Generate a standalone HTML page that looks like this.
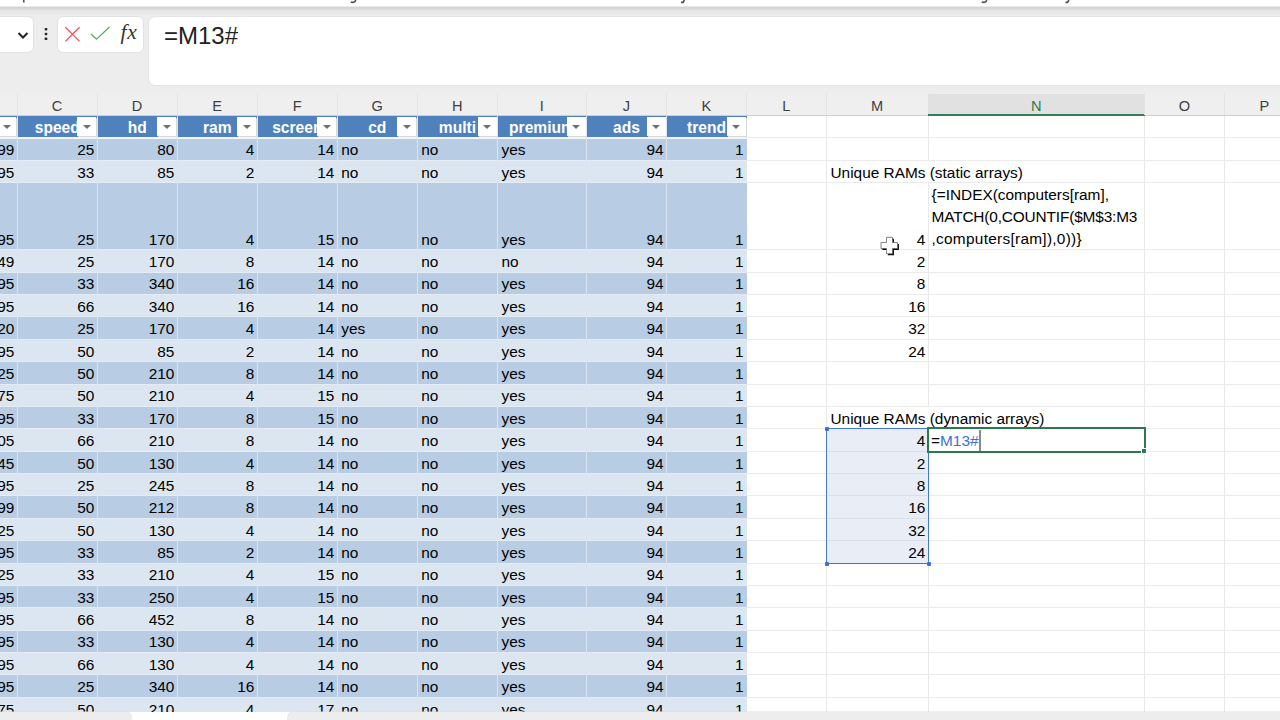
<!DOCTYPE html><html><head><meta charset="utf-8"><style>
*{margin:0;padding:0;box-sizing:border-box}
html,body{width:1280px;height:720px;overflow:hidden;background:#fff;font-family:"Liberation Sans",sans-serif}
.ab{position:absolute}
.t{position:absolute;white-space:nowrap;font-size:15.4px;color:#000;line-height:16px}
.r{text-align:right}
.hd{position:absolute;white-space:nowrap;font-size:15.6px;color:#fff;font-weight:bold;line-height:16px;text-align:center;overflow:hidden}
.btn{position:absolute;background:#fff;width:19px;height:19px;box-shadow:1px 1px 0 #d8d8d8}
.btn:after{content:"";position:absolute;left:5.5px;top:8px;border-left:4px solid transparent;border-right:4px solid transparent;border-top:4px solid #6f6f6f}
.ch{position:absolute;top:93px;height:22px;font-size:14.6px;color:#404040;text-align:center;line-height:26px;border-right:1px solid #e3e3e3}
.vg{position:absolute;top:116px;width:1px;background:#e8e8e8}
.hg{position:absolute;left:0;width:1280px;height:1px;background:#ebebeb}
</style></head><body>

<div class="ab" style="left:0;top:0;width:1280px;height:7px;background:#fff"></div>
<div class="ab" style="left:0;top:6px;width:1280px;height:87px;background:#ededed"></div>
<div class="ab" style="left:0;top:6px;width:1280px;height:9px;background:linear-gradient(#f4f4f4 0px,#d3d3d3 1.6px,#dcdcdc 3px,#e6e6e6 5px,#ededed 9px)"></div>
<svg class="ab" style="left:0;top:0" width="1280" height="6" viewBox="0 0 1280 6"><g fill="none" stroke="#505050" stroke-width="1.6"><path d="M23.8 0 V2.6"/><path d="M355.5 0 V0.8 Q355 2.4 353 2.4 Q351.5 2.4 350.8 1.8"/><path d="M684.5 0 L683 2.4 H681"/><path d="M986.5 0 V0.8 Q986 2.4 984 2.4 Q982.5 2.4 981.8 1.8"/><path d="M1069 0 L1067.5 2.4 H1065.5"/></g></svg>
<div class="ab" style="left:-10px;top:16.5px;width:43px;height:35.5px;background:#fff;border-radius:5px;box-shadow:0 0 0 1px #e2e2e2"></div>
<svg class="ab" style="left:17px;top:30px" width="12" height="10" viewBox="0 0 12 10"><path d="M1.5 3 L6 7.5 L10.5 3" fill="none" stroke="#222" stroke-width="2"/></svg>
<svg class="ab" style="left:43px;top:27px" width="6" height="14" viewBox="0 0 6 14"><rect x="1.7" y="0.9" width="2.6" height="2.6" rx="0.7" fill="#2a2a2a"/><rect x="1.7" y="5.7" width="2.6" height="2.6" rx="0.7" fill="#2a2a2a"/><rect x="1.7" y="10.5" width="2.6" height="2.6" rx="0.7" fill="#2a2a2a"/></svg>
<div class="ab" style="left:58.3px;top:16.5px;width:84.7px;height:35.5px;background:#fff;border-radius:5px;box-shadow:0 0 0 1px #e2e2e2"></div>
<svg class="ab" style="left:64px;top:26px" width="17" height="17" viewBox="0 0 17 17"><path d="M1.4 1.2 L15.6 15.4 M15.6 1.2 L1.4 15.4" stroke="#ee5555" stroke-width="1.3" fill="none"/></svg>
<svg class="ab" style="left:90px;top:26px" width="21" height="16" viewBox="0 0 21 16"><path d="M1 8 L6.5 13.2 L19.5 1" stroke="#55b065" stroke-width="1.3" fill="none"/></svg>
<div class="ab" style="left:120.5px;top:18.4px;font-family:'Liberation Serif',serif;font-style:italic;font-size:21.5px;letter-spacing:0.8px;color:#333;line-height:28px">fx</div>
<div class="ab" style="left:148.8px;top:16.5px;width:1200px;height:68.2px;background:#fff;border-radius:6px;box-shadow:0 0 0 1px #e4e4e4"></div>
<div class="ab" style="left:164px;top:22px;font-size:24px;color:#222;line-height:28px">=M13#</div>
<div class="ab" style="left:0;top:93px;width:1280px;height:22.5px;background:#efefef;border-bottom:1px solid #cfcfcf"></div>
<div class="ch" style="left:-63px;width:80.89999999999999px;color:#3f3f3f">B</div>
<div class="ch" style="left:17.3px;width:80.6px;color:#3f3f3f">C</div>
<div class="ch" style="left:97.3px;width:80.60000000000001px;color:#3f3f3f">D</div>
<div class="ch" style="left:177.3px;width:80.6px;color:#3f3f3f">E</div>
<div class="ch" style="left:257.3px;width:80.6px;color:#3f3f3f">F</div>
<div class="ch" style="left:337.3px;width:80.6px;color:#3f3f3f">G</div>
<div class="ch" style="left:417.3px;width:80.79999999999998px;color:#3f3f3f">H</div>
<div class="ch" style="left:497.5px;width:89.6px;color:#3f3f3f">I</div>
<div class="ch" style="left:586.5px;width:80.6px;color:#3f3f3f">J</div>
<div class="ch" style="left:666.5px;width:80.6px;color:#3f3f3f">K</div>
<div class="ch" style="left:746.5px;width:80.6px;color:#3f3f3f">L</div>
<div class="ch" style="left:826.5px;width:102.39999999999995px;color:#3f3f3f">M</div>
<div class="ab" style="left:928.3px;top:94px;width:216.4000000000001px;height:22px;background:#e1e1e1"></div>
<div class="ab" style="left:928.3px;top:113.5px;width:216.4000000000001px;height:2.5px;background:#367f56"></div>
<div class="ch" style="left:928.3px;width:217.00000000000009px;color:#2a7a4c">N</div>
<div class="ch" style="left:1144.7px;width:80.6px;color:#3f3f3f">O</div>
<div class="ch" style="left:1224.7px;width:80.6px;color:#3f3f3f">P</div>
<div class="vg" style="left:16.8px;height:596px"></div>
<div class="vg" style="left:96.8px;height:596px"></div>
<div class="vg" style="left:176.8px;height:596px"></div>
<div class="vg" style="left:256.8px;height:596px"></div>
<div class="vg" style="left:336.8px;height:596px"></div>
<div class="vg" style="left:416.8px;height:596px"></div>
<div class="vg" style="left:497.0px;height:596px"></div>
<div class="vg" style="left:586.0px;height:596px"></div>
<div class="vg" style="left:666.0px;height:596px"></div>
<div class="vg" style="left:746.0px;height:596px"></div>
<div class="vg" style="left:826.0px;height:596px"></div>
<div class="vg" style="left:927.8px;height:596px"></div>
<div class="vg" style="left:1144.2px;height:596px"></div>
<div class="vg" style="left:1224.2px;height:596px"></div>
<div class="vg" style="left:1304.2px;height:596px"></div>
<div class="hg" style="top:137px"></div>
<div class="hg" style="top:160px"></div>
<div class="hg" style="top:182px"></div>
<div class="hg" style="top:249px"></div>
<div class="hg" style="top:272px"></div>
<div class="hg" style="top:294px"></div>
<div class="hg" style="top:316px"></div>
<div class="hg" style="top:339px"></div>
<div class="hg" style="top:361px"></div>
<div class="hg" style="top:384px"></div>
<div class="hg" style="top:406px"></div>
<div class="hg" style="top:428px"></div>
<div class="hg" style="top:451px"></div>
<div class="hg" style="top:473px"></div>
<div class="hg" style="top:495px"></div>
<div class="hg" style="top:518px"></div>
<div class="hg" style="top:540px"></div>
<div class="hg" style="top:563px"></div>
<div class="hg" style="top:585px"></div>
<div class="hg" style="top:607px"></div>
<div class="hg" style="top:630px"></div>
<div class="hg" style="top:652px"></div>
<div class="hg" style="top:674px"></div>
<div class="hg" style="top:697px"></div>
<div class="ab" style="left:0;top:115.8px;width:747px;height:22.174999999999997px;background:#4f81bd"></div>
<div class="hd" style="left:-63px;top:119.6px;width:60.3px;"><span style="display:inline-block;width:80.3px">price</span></div>
<div class="btn" style="left:-2.6999999999999993px;top:117.3px"></div>
<div class="hd" style="left:17.3px;top:119.6px;width:60.0px;"><span style="display:inline-block;width:80.0px">speed</span></div>
<div class="btn" style="left:77.3px;top:117.3px"></div>
<div class="hd" style="left:97.3px;top:119.6px;width:60.000000000000014px;"><span style="display:inline-block;width:80.00000000000001px">hd</span></div>
<div class="btn" style="left:157.3px;top:117.3px"></div>
<div class="hd" style="left:177.3px;top:119.6px;width:60.0px;"><span style="display:inline-block;width:80.0px">ram</span></div>
<div class="btn" style="left:237.3px;top:117.3px"></div>
<div class="hd" style="left:257.3px;top:119.6px;width:60.0px;"><span style="display:inline-block;width:80.0px">screen</span></div>
<div class="btn" style="left:317.3px;top:117.3px"></div>
<div class="hd" style="left:337.3px;top:119.6px;width:60.0px;"><span style="display:inline-block;width:80.0px">cd</span></div>
<div class="btn" style="left:397.3px;top:117.3px"></div>
<div class="hd" style="left:417.3px;top:119.6px;width:60.19999999999999px;"><span style="display:inline-block;width:80.19999999999999px">multi</span></div>
<div class="btn" style="left:477.5px;top:117.3px"></div>
<div class="hd" style="left:497.5px;top:119.6px;width:69.0px;"><span style="display:inline-block;width:89.0px">premium</span></div>
<div class="btn" style="left:566.5px;top:117.3px"></div>
<div class="hd" style="left:586.5px;top:119.6px;width:60.0px;"><span style="display:inline-block;width:80.0px">ads</span></div>
<div class="btn" style="left:646.5px;top:117.3px"></div>
<div class="hd" style="left:666.5px;top:119.6px;width:60.0px;"><span style="display:inline-block;width:80.0px">trend</span></div>
<div class="btn" style="left:726.5px;top:117.3px"></div>
<div class="ab" style="left:0;top:138.475px;width:747px;height:21.875px;background:#b8cce4"></div>
<div class="t r" style="left:-63px;width:77.39999999999999px;top:142px">99</div>
<div class="t r" style="left:17.3px;width:77.1px;top:142px">25</div>
<div class="t r" style="left:97.3px;width:77.10000000000001px;top:142px">80</div>
<div class="t r" style="left:177.3px;width:77.1px;top:142px">4</div>
<div class="t r" style="left:257.3px;width:77.1px;top:142px">14</div>
<div class="t" style="left:341.3px;top:142px">no</div>
<div class="t" style="left:421.3px;top:142px">no</div>
<div class="t" style="left:501.5px;top:142px">yes</div>
<div class="t r" style="left:586.5px;width:77.1px;top:142px">94</div>
<div class="t r" style="left:666.5px;width:77.1px;top:142px">1</div>
<div class="ab" style="left:0;top:160.85px;width:747px;height:21.875px;background:#dce6f1"></div>
<div class="t r" style="left:-63px;width:77.39999999999999px;top:165px">95</div>
<div class="t r" style="left:17.3px;width:77.1px;top:165px">33</div>
<div class="t r" style="left:97.3px;width:77.10000000000001px;top:165px">85</div>
<div class="t r" style="left:177.3px;width:77.1px;top:165px">2</div>
<div class="t r" style="left:257.3px;width:77.1px;top:165px">14</div>
<div class="t" style="left:341.3px;top:165px">no</div>
<div class="t" style="left:421.3px;top:165px">no</div>
<div class="t" style="left:501.5px;top:165px">yes</div>
<div class="t r" style="left:586.5px;width:77.1px;top:165px">94</div>
<div class="t r" style="left:666.5px;width:77.1px;top:165px">1</div>
<div class="ab" style="left:0;top:183.225px;width:747px;height:66.625px;background:#b8cce4"></div>
<div class="t r" style="left:-63px;width:77.39999999999999px;top:232px">95</div>
<div class="t r" style="left:17.3px;width:77.1px;top:232px">25</div>
<div class="t r" style="left:97.3px;width:77.10000000000001px;top:232px">170</div>
<div class="t r" style="left:177.3px;width:77.1px;top:232px">4</div>
<div class="t r" style="left:257.3px;width:77.1px;top:232px">15</div>
<div class="t" style="left:341.3px;top:232px">no</div>
<div class="t" style="left:421.3px;top:232px">no</div>
<div class="t" style="left:501.5px;top:232px">yes</div>
<div class="t r" style="left:586.5px;width:77.1px;top:232px">94</div>
<div class="t r" style="left:666.5px;width:77.1px;top:232px">1</div>
<div class="ab" style="left:0;top:250.35px;width:747px;height:21.87500000000003px;background:#dce6f1"></div>
<div class="t r" style="left:-63px;width:77.39999999999999px;top:254px">49</div>
<div class="t r" style="left:17.3px;width:77.1px;top:254px">25</div>
<div class="t r" style="left:97.3px;width:77.10000000000001px;top:254px">170</div>
<div class="t r" style="left:177.3px;width:77.1px;top:254px">8</div>
<div class="t r" style="left:257.3px;width:77.1px;top:254px">14</div>
<div class="t" style="left:341.3px;top:254px">no</div>
<div class="t" style="left:421.3px;top:254px">no</div>
<div class="t" style="left:501.5px;top:254px">no</div>
<div class="t r" style="left:586.5px;width:77.1px;top:254px">94</div>
<div class="t r" style="left:666.5px;width:77.1px;top:254px">1</div>
<div class="ab" style="left:0;top:272.725px;width:747px;height:21.875px;background:#b8cce4"></div>
<div class="t r" style="left:-63px;width:77.39999999999999px;top:276px">95</div>
<div class="t r" style="left:17.3px;width:77.1px;top:276px">33</div>
<div class="t r" style="left:97.3px;width:77.10000000000001px;top:276px">340</div>
<div class="t r" style="left:177.3px;width:77.1px;top:276px">16</div>
<div class="t r" style="left:257.3px;width:77.1px;top:276px">14</div>
<div class="t" style="left:341.3px;top:276px">no</div>
<div class="t" style="left:421.3px;top:276px">no</div>
<div class="t" style="left:501.5px;top:276px">yes</div>
<div class="t r" style="left:586.5px;width:77.1px;top:276px">94</div>
<div class="t r" style="left:666.5px;width:77.1px;top:276px">1</div>
<div class="ab" style="left:0;top:295.1px;width:747px;height:21.875px;background:#dce6f1"></div>
<div class="t r" style="left:-63px;width:77.39999999999999px;top:299px">95</div>
<div class="t r" style="left:17.3px;width:77.1px;top:299px">66</div>
<div class="t r" style="left:97.3px;width:77.10000000000001px;top:299px">340</div>
<div class="t r" style="left:177.3px;width:77.1px;top:299px">16</div>
<div class="t r" style="left:257.3px;width:77.1px;top:299px">14</div>
<div class="t" style="left:341.3px;top:299px">no</div>
<div class="t" style="left:421.3px;top:299px">no</div>
<div class="t" style="left:501.5px;top:299px">yes</div>
<div class="t r" style="left:586.5px;width:77.1px;top:299px">94</div>
<div class="t r" style="left:666.5px;width:77.1px;top:299px">1</div>
<div class="ab" style="left:0;top:317.475px;width:747px;height:21.875px;background:#b8cce4"></div>
<div class="t r" style="left:-63px;width:77.39999999999999px;top:321px">20</div>
<div class="t r" style="left:17.3px;width:77.1px;top:321px">25</div>
<div class="t r" style="left:97.3px;width:77.10000000000001px;top:321px">170</div>
<div class="t r" style="left:177.3px;width:77.1px;top:321px">4</div>
<div class="t r" style="left:257.3px;width:77.1px;top:321px">14</div>
<div class="t" style="left:341.3px;top:321px">yes</div>
<div class="t" style="left:421.3px;top:321px">no</div>
<div class="t" style="left:501.5px;top:321px">yes</div>
<div class="t r" style="left:586.5px;width:77.1px;top:321px">94</div>
<div class="t r" style="left:666.5px;width:77.1px;top:321px">1</div>
<div class="ab" style="left:0;top:339.85px;width:747px;height:21.875px;background:#dce6f1"></div>
<div class="t r" style="left:-63px;width:77.39999999999999px;top:344px">95</div>
<div class="t r" style="left:17.3px;width:77.1px;top:344px">50</div>
<div class="t r" style="left:97.3px;width:77.10000000000001px;top:344px">85</div>
<div class="t r" style="left:177.3px;width:77.1px;top:344px">2</div>
<div class="t r" style="left:257.3px;width:77.1px;top:344px">14</div>
<div class="t" style="left:341.3px;top:344px">no</div>
<div class="t" style="left:421.3px;top:344px">no</div>
<div class="t" style="left:501.5px;top:344px">yes</div>
<div class="t r" style="left:586.5px;width:77.1px;top:344px">94</div>
<div class="t r" style="left:666.5px;width:77.1px;top:344px">1</div>
<div class="ab" style="left:0;top:362.225px;width:747px;height:21.875px;background:#b8cce4"></div>
<div class="t r" style="left:-63px;width:77.39999999999999px;top:366px">25</div>
<div class="t r" style="left:17.3px;width:77.1px;top:366px">50</div>
<div class="t r" style="left:97.3px;width:77.10000000000001px;top:366px">210</div>
<div class="t r" style="left:177.3px;width:77.1px;top:366px">8</div>
<div class="t r" style="left:257.3px;width:77.1px;top:366px">14</div>
<div class="t" style="left:341.3px;top:366px">no</div>
<div class="t" style="left:421.3px;top:366px">no</div>
<div class="t" style="left:501.5px;top:366px">yes</div>
<div class="t r" style="left:586.5px;width:77.1px;top:366px">94</div>
<div class="t r" style="left:666.5px;width:77.1px;top:366px">1</div>
<div class="ab" style="left:0;top:384.6px;width:747px;height:21.875px;background:#dce6f1"></div>
<div class="t r" style="left:-63px;width:77.39999999999999px;top:388px">75</div>
<div class="t r" style="left:17.3px;width:77.1px;top:388px">50</div>
<div class="t r" style="left:97.3px;width:77.10000000000001px;top:388px">210</div>
<div class="t r" style="left:177.3px;width:77.1px;top:388px">4</div>
<div class="t r" style="left:257.3px;width:77.1px;top:388px">15</div>
<div class="t" style="left:341.3px;top:388px">no</div>
<div class="t" style="left:421.3px;top:388px">no</div>
<div class="t" style="left:501.5px;top:388px">yes</div>
<div class="t r" style="left:586.5px;width:77.1px;top:388px">94</div>
<div class="t r" style="left:666.5px;width:77.1px;top:388px">1</div>
<div class="ab" style="left:0;top:406.975px;width:747px;height:21.875px;background:#b8cce4"></div>
<div class="t r" style="left:-63px;width:77.39999999999999px;top:411px">95</div>
<div class="t r" style="left:17.3px;width:77.1px;top:411px">33</div>
<div class="t r" style="left:97.3px;width:77.10000000000001px;top:411px">170</div>
<div class="t r" style="left:177.3px;width:77.1px;top:411px">8</div>
<div class="t r" style="left:257.3px;width:77.1px;top:411px">15</div>
<div class="t" style="left:341.3px;top:411px">no</div>
<div class="t" style="left:421.3px;top:411px">no</div>
<div class="t" style="left:501.5px;top:411px">yes</div>
<div class="t r" style="left:586.5px;width:77.1px;top:411px">94</div>
<div class="t r" style="left:666.5px;width:77.1px;top:411px">1</div>
<div class="ab" style="left:0;top:429.35px;width:747px;height:21.875px;background:#dce6f1"></div>
<div class="t r" style="left:-63px;width:77.39999999999999px;top:433px">05</div>
<div class="t r" style="left:17.3px;width:77.1px;top:433px">66</div>
<div class="t r" style="left:97.3px;width:77.10000000000001px;top:433px">210</div>
<div class="t r" style="left:177.3px;width:77.1px;top:433px">8</div>
<div class="t r" style="left:257.3px;width:77.1px;top:433px">14</div>
<div class="t" style="left:341.3px;top:433px">no</div>
<div class="t" style="left:421.3px;top:433px">no</div>
<div class="t" style="left:501.5px;top:433px">yes</div>
<div class="t r" style="left:586.5px;width:77.1px;top:433px">94</div>
<div class="t r" style="left:666.5px;width:77.1px;top:433px">1</div>
<div class="ab" style="left:0;top:451.725px;width:747px;height:21.875px;background:#b8cce4"></div>
<div class="t r" style="left:-63px;width:77.39999999999999px;top:456px">45</div>
<div class="t r" style="left:17.3px;width:77.1px;top:456px">50</div>
<div class="t r" style="left:97.3px;width:77.10000000000001px;top:456px">130</div>
<div class="t r" style="left:177.3px;width:77.1px;top:456px">4</div>
<div class="t r" style="left:257.3px;width:77.1px;top:456px">14</div>
<div class="t" style="left:341.3px;top:456px">no</div>
<div class="t" style="left:421.3px;top:456px">no</div>
<div class="t" style="left:501.5px;top:456px">yes</div>
<div class="t r" style="left:586.5px;width:77.1px;top:456px">94</div>
<div class="t r" style="left:666.5px;width:77.1px;top:456px">1</div>
<div class="ab" style="left:0;top:474.1px;width:747px;height:21.875px;background:#dce6f1"></div>
<div class="t r" style="left:-63px;width:77.39999999999999px;top:478px">95</div>
<div class="t r" style="left:17.3px;width:77.1px;top:478px">25</div>
<div class="t r" style="left:97.3px;width:77.10000000000001px;top:478px">245</div>
<div class="t r" style="left:177.3px;width:77.1px;top:478px">8</div>
<div class="t r" style="left:257.3px;width:77.1px;top:478px">14</div>
<div class="t" style="left:341.3px;top:478px">no</div>
<div class="t" style="left:421.3px;top:478px">no</div>
<div class="t" style="left:501.5px;top:478px">yes</div>
<div class="t r" style="left:586.5px;width:77.1px;top:478px">94</div>
<div class="t r" style="left:666.5px;width:77.1px;top:478px">1</div>
<div class="ab" style="left:0;top:496.475px;width:747px;height:21.875px;background:#b8cce4"></div>
<div class="t r" style="left:-63px;width:77.39999999999999px;top:500px">99</div>
<div class="t r" style="left:17.3px;width:77.1px;top:500px">50</div>
<div class="t r" style="left:97.3px;width:77.10000000000001px;top:500px">212</div>
<div class="t r" style="left:177.3px;width:77.1px;top:500px">8</div>
<div class="t r" style="left:257.3px;width:77.1px;top:500px">14</div>
<div class="t" style="left:341.3px;top:500px">no</div>
<div class="t" style="left:421.3px;top:500px">no</div>
<div class="t" style="left:501.5px;top:500px">yes</div>
<div class="t r" style="left:586.5px;width:77.1px;top:500px">94</div>
<div class="t r" style="left:666.5px;width:77.1px;top:500px">1</div>
<div class="ab" style="left:0;top:518.85px;width:747px;height:21.875px;background:#dce6f1"></div>
<div class="t r" style="left:-63px;width:77.39999999999999px;top:523px">25</div>
<div class="t r" style="left:17.3px;width:77.1px;top:523px">50</div>
<div class="t r" style="left:97.3px;width:77.10000000000001px;top:523px">130</div>
<div class="t r" style="left:177.3px;width:77.1px;top:523px">4</div>
<div class="t r" style="left:257.3px;width:77.1px;top:523px">14</div>
<div class="t" style="left:341.3px;top:523px">no</div>
<div class="t" style="left:421.3px;top:523px">no</div>
<div class="t" style="left:501.5px;top:523px">yes</div>
<div class="t r" style="left:586.5px;width:77.1px;top:523px">94</div>
<div class="t r" style="left:666.5px;width:77.1px;top:523px">1</div>
<div class="ab" style="left:0;top:541.225px;width:747px;height:21.875px;background:#b8cce4"></div>
<div class="t r" style="left:-63px;width:77.39999999999999px;top:545px">95</div>
<div class="t r" style="left:17.3px;width:77.1px;top:545px">33</div>
<div class="t r" style="left:97.3px;width:77.10000000000001px;top:545px">85</div>
<div class="t r" style="left:177.3px;width:77.1px;top:545px">2</div>
<div class="t r" style="left:257.3px;width:77.1px;top:545px">14</div>
<div class="t" style="left:341.3px;top:545px">no</div>
<div class="t" style="left:421.3px;top:545px">no</div>
<div class="t" style="left:501.5px;top:545px">yes</div>
<div class="t r" style="left:586.5px;width:77.1px;top:545px">94</div>
<div class="t r" style="left:666.5px;width:77.1px;top:545px">1</div>
<div class="ab" style="left:0;top:563.6px;width:747px;height:21.875px;background:#dce6f1"></div>
<div class="t r" style="left:-63px;width:77.39999999999999px;top:567px">25</div>
<div class="t r" style="left:17.3px;width:77.1px;top:567px">33</div>
<div class="t r" style="left:97.3px;width:77.10000000000001px;top:567px">210</div>
<div class="t r" style="left:177.3px;width:77.1px;top:567px">4</div>
<div class="t r" style="left:257.3px;width:77.1px;top:567px">15</div>
<div class="t" style="left:341.3px;top:567px">no</div>
<div class="t" style="left:421.3px;top:567px">no</div>
<div class="t" style="left:501.5px;top:567px">yes</div>
<div class="t r" style="left:586.5px;width:77.1px;top:567px">94</div>
<div class="t r" style="left:666.5px;width:77.1px;top:567px">1</div>
<div class="ab" style="left:0;top:585.975px;width:747px;height:21.875px;background:#b8cce4"></div>
<div class="t r" style="left:-63px;width:77.39999999999999px;top:590px">95</div>
<div class="t r" style="left:17.3px;width:77.1px;top:590px">33</div>
<div class="t r" style="left:97.3px;width:77.10000000000001px;top:590px">250</div>
<div class="t r" style="left:177.3px;width:77.1px;top:590px">4</div>
<div class="t r" style="left:257.3px;width:77.1px;top:590px">15</div>
<div class="t" style="left:341.3px;top:590px">no</div>
<div class="t" style="left:421.3px;top:590px">no</div>
<div class="t" style="left:501.5px;top:590px">yes</div>
<div class="t r" style="left:586.5px;width:77.1px;top:590px">94</div>
<div class="t r" style="left:666.5px;width:77.1px;top:590px">1</div>
<div class="ab" style="left:0;top:608.35px;width:747px;height:21.875px;background:#dce6f1"></div>
<div class="t r" style="left:-63px;width:77.39999999999999px;top:612px">95</div>
<div class="t r" style="left:17.3px;width:77.1px;top:612px">66</div>
<div class="t r" style="left:97.3px;width:77.10000000000001px;top:612px">452</div>
<div class="t r" style="left:177.3px;width:77.1px;top:612px">8</div>
<div class="t r" style="left:257.3px;width:77.1px;top:612px">14</div>
<div class="t" style="left:341.3px;top:612px">no</div>
<div class="t" style="left:421.3px;top:612px">no</div>
<div class="t" style="left:501.5px;top:612px">yes</div>
<div class="t r" style="left:586.5px;width:77.1px;top:612px">94</div>
<div class="t r" style="left:666.5px;width:77.1px;top:612px">1</div>
<div class="ab" style="left:0;top:630.725px;width:747px;height:21.875px;background:#b8cce4"></div>
<div class="t r" style="left:-63px;width:77.39999999999999px;top:634px">95</div>
<div class="t r" style="left:17.3px;width:77.1px;top:634px">33</div>
<div class="t r" style="left:97.3px;width:77.10000000000001px;top:634px">130</div>
<div class="t r" style="left:177.3px;width:77.1px;top:634px">4</div>
<div class="t r" style="left:257.3px;width:77.1px;top:634px">14</div>
<div class="t" style="left:341.3px;top:634px">no</div>
<div class="t" style="left:421.3px;top:634px">no</div>
<div class="t" style="left:501.5px;top:634px">yes</div>
<div class="t r" style="left:586.5px;width:77.1px;top:634px">94</div>
<div class="t r" style="left:666.5px;width:77.1px;top:634px">1</div>
<div class="ab" style="left:0;top:653.1px;width:747px;height:21.875px;background:#dce6f1"></div>
<div class="t r" style="left:-63px;width:77.39999999999999px;top:657px">95</div>
<div class="t r" style="left:17.3px;width:77.1px;top:657px">66</div>
<div class="t r" style="left:97.3px;width:77.10000000000001px;top:657px">130</div>
<div class="t r" style="left:177.3px;width:77.1px;top:657px">4</div>
<div class="t r" style="left:257.3px;width:77.1px;top:657px">14</div>
<div class="t" style="left:341.3px;top:657px">no</div>
<div class="t" style="left:421.3px;top:657px">no</div>
<div class="t" style="left:501.5px;top:657px">yes</div>
<div class="t r" style="left:586.5px;width:77.1px;top:657px">94</div>
<div class="t r" style="left:666.5px;width:77.1px;top:657px">1</div>
<div class="ab" style="left:0;top:675.475px;width:747px;height:21.875px;background:#b8cce4"></div>
<div class="t r" style="left:-63px;width:77.39999999999999px;top:679px">95</div>
<div class="t r" style="left:17.3px;width:77.1px;top:679px">25</div>
<div class="t r" style="left:97.3px;width:77.10000000000001px;top:679px">340</div>
<div class="t r" style="left:177.3px;width:77.1px;top:679px">16</div>
<div class="t r" style="left:257.3px;width:77.1px;top:679px">14</div>
<div class="t" style="left:341.3px;top:679px">no</div>
<div class="t" style="left:421.3px;top:679px">no</div>
<div class="t" style="left:501.5px;top:679px">yes</div>
<div class="t r" style="left:586.5px;width:77.1px;top:679px">94</div>
<div class="t r" style="left:666.5px;width:77.1px;top:679px">1</div>
<div class="ab" style="left:0;top:697.85px;width:747px;height:21.875px;background:#dce6f1"></div>
<div class="t r" style="left:-63px;width:77.39999999999999px;top:702px">75</div>
<div class="t r" style="left:17.3px;width:77.1px;top:702px">50</div>
<div class="t r" style="left:97.3px;width:77.10000000000001px;top:702px">210</div>
<div class="t r" style="left:177.3px;width:77.1px;top:702px">4</div>
<div class="t r" style="left:257.3px;width:77.1px;top:702px">17</div>
<div class="t" style="left:341.3px;top:702px">no</div>
<div class="t" style="left:421.3px;top:702px">no</div>
<div class="t" style="left:501.5px;top:702px">yes</div>
<div class="t r" style="left:586.5px;width:77.1px;top:702px">94</div>
<div class="t r" style="left:666.5px;width:77.1px;top:702px">1</div>
<div class="ab" style="left:0;top:137px;width:747px;height:2px;background:#f2f5fa"></div>
<div class="ab" style="left:0;top:160px;width:747px;height:1px;background:#e6ecf5"></div>
<div class="ab" style="left:0;top:182px;width:747px;height:1px;background:#e6ecf5"></div>
<div class="ab" style="left:0;top:249px;width:747px;height:1px;background:#e6ecf5"></div>
<div class="ab" style="left:0;top:272px;width:747px;height:1px;background:#e6ecf5"></div>
<div class="ab" style="left:0;top:294px;width:747px;height:1px;background:#e6ecf5"></div>
<div class="ab" style="left:0;top:316px;width:747px;height:1px;background:#e6ecf5"></div>
<div class="ab" style="left:0;top:339px;width:747px;height:1px;background:#e6ecf5"></div>
<div class="ab" style="left:0;top:361px;width:747px;height:1px;background:#e6ecf5"></div>
<div class="ab" style="left:0;top:384px;width:747px;height:1px;background:#e6ecf5"></div>
<div class="ab" style="left:0;top:406px;width:747px;height:1px;background:#e6ecf5"></div>
<div class="ab" style="left:0;top:428px;width:747px;height:1px;background:#e6ecf5"></div>
<div class="ab" style="left:0;top:451px;width:747px;height:1px;background:#e6ecf5"></div>
<div class="ab" style="left:0;top:473px;width:747px;height:1px;background:#e6ecf5"></div>
<div class="ab" style="left:0;top:495px;width:747px;height:1px;background:#e6ecf5"></div>
<div class="ab" style="left:0;top:518px;width:747px;height:1px;background:#e6ecf5"></div>
<div class="ab" style="left:0;top:540px;width:747px;height:1px;background:#e6ecf5"></div>
<div class="ab" style="left:0;top:563px;width:747px;height:1px;background:#e6ecf5"></div>
<div class="ab" style="left:0;top:585px;width:747px;height:1px;background:#e6ecf5"></div>
<div class="ab" style="left:0;top:607px;width:747px;height:1px;background:#e6ecf5"></div>
<div class="ab" style="left:0;top:630px;width:747px;height:1px;background:#e6ecf5"></div>
<div class="ab" style="left:0;top:652px;width:747px;height:1px;background:#e6ecf5"></div>
<div class="ab" style="left:0;top:674px;width:747px;height:1px;background:#e6ecf5"></div>
<div class="ab" style="left:0;top:697px;width:747px;height:1px;background:#e6ecf5"></div>
<div class="ab" style="left:16.8px;top:116px;width:1px;height:596px;background:#d9e4f0"></div>
<div class="ab" style="left:96.8px;top:116px;width:1px;height:596px;background:#d9e4f0"></div>
<div class="ab" style="left:176.8px;top:116px;width:1px;height:596px;background:#d9e4f0"></div>
<div class="ab" style="left:256.8px;top:116px;width:1px;height:596px;background:#d9e4f0"></div>
<div class="ab" style="left:336.8px;top:116px;width:1px;height:596px;background:#d9e4f0"></div>
<div class="ab" style="left:416.8px;top:116px;width:1px;height:596px;background:#d9e4f0"></div>
<div class="ab" style="left:497.0px;top:116px;width:1px;height:596px;background:#d9e4f0"></div>
<div class="ab" style="left:586.0px;top:116px;width:1px;height:596px;background:#d9e4f0"></div>
<div class="ab" style="left:666.0px;top:116px;width:1px;height:596px;background:#d9e4f0"></div>
<div class="ab" style="left:927px;top:161.35px;width:3px;height:20.875px;background:#fff"></div>
<div class="ab" style="left:927px;top:407.475px;width:3px;height:20.875px;background:#fff"></div>
<div class="t" style="left:830.5px;top:165px">Unique RAMs (static arrays)</div>
<div class="t" style="left:931.5px;top:187px;letter-spacing:0px">{=INDEX(computers[ram],</div>
<div class="t" style="left:931.5px;top:209px;letter-spacing:-0.15px">MATCH(0,COUNTIF($M$3:M3</div>
<div class="t" style="left:931.5px;top:231px;letter-spacing:0.28px">,computers[ram]),0))}</div>
<div class="t r" style="left:826.5px;width:98.89999999999995px;top:232px">4</div>
<div class="t r" style="left:826.5px;width:98.89999999999995px;top:254px">2</div>
<div class="t r" style="left:826.5px;width:98.89999999999995px;top:276px">8</div>
<div class="t r" style="left:826.5px;width:98.89999999999995px;top:299px">16</div>
<div class="t r" style="left:826.5px;width:98.89999999999995px;top:321px">32</div>
<div class="t r" style="left:826.5px;width:98.89999999999995px;top:344px">24</div>
<div class="t" style="left:830.5px;top:411px">Unique RAMs (dynamic arrays)</div>
<div class="ab" style="left:826px;top:428px;width:103px;height:136px;background:#e8edf6;border:1px solid #4476d4"></div>
<div class="t r" style="left:826.5px;width:98.89999999999995px;top:433px">4</div>
<div class="t r" style="left:826.5px;width:98.89999999999995px;top:456px">2</div>
<div class="t r" style="left:826.5px;width:98.89999999999995px;top:478px">8</div>
<div class="t r" style="left:826.5px;width:98.89999999999995px;top:500px">16</div>
<div class="t r" style="left:826.5px;width:98.89999999999995px;top:523px">32</div>
<div class="t r" style="left:826.5px;width:98.89999999999995px;top:545px">24</div>
<div class="ab" style="left:828px;top:450.725px;width:99px;height:1px;background:#d9dfe9"></div>
<div class="ab" style="left:828px;top:473.1px;width:99px;height:1px;background:#d9dfe9"></div>
<div class="ab" style="left:828px;top:495.475px;width:99px;height:1px;background:#d9dfe9"></div>
<div class="ab" style="left:828px;top:517.85px;width:99px;height:1px;background:#d9dfe9"></div>
<div class="ab" style="left:828px;top:540.225px;width:99px;height:1px;background:#d9dfe9"></div>
<div class="ab" style="left:825.0px;top:427.0px;width:3.5px;height:3.5px;border-radius:1px;background:#3a6fd0"></div>
<div class="ab" style="left:927.0px;top:427.0px;width:3.5px;height:3.5px;border-radius:1px;background:#3a6fd0"></div>
<div class="ab" style="left:825.0px;top:562.0px;width:3.5px;height:3.5px;border-radius:1px;background:#3a6fd0"></div>
<div class="ab" style="left:927.0px;top:562.0px;width:3.5px;height:3.5px;border-radius:1px;background:#3a6fd0"></div>
<div class="ab" style="left:927px;top:427px;width:219px;height:26px;border:2px solid #2c7a4b;background:#fff"></div>
<div class="ab" style="left:1141px;top:448px;width:6px;height:6px;background:#fff"></div>
<div class="ab" style="left:1142px;top:449px;width:4px;height:4px;background:#2c7a4b"></div>
<div class="t" style="left:931px;top:433px">=<span style="color:#3b72d0">M13#</span></div>
<div class="ab" style="left:979.3px;top:430.2px;width:1.6px;height:21px;background:#8a8a8a"></div>
<svg class="ab" style="left:878px;top:234px" width="24" height="24" viewBox="0 0 24 24"><path transform="translate(1.4,1.4)" d="M8.5 3.3 H14.5 V8.5 H19.5 V14.5 H14.5 V19.8 H8.5 V14.5 H3 V8.5 H8.5 Z" fill="#000"/><path d="M8.5 3.3 H14.5 V8.5 H19.5 V14.5 H14.5 V19.8 H8.5 V14.5 H3 V8.5 H8.5 Z" fill="#fff" stroke="#666" stroke-width="0.8"/></svg>
<div class="ab" style="left:0;top:712px;width:1280px;height:8px;background:#fff"></div>
<div class="ab" style="left:-10px;top:712.2px;width:140.5px;height:12px;background:#ededed;border-radius:0 5px 0 0;box-shadow:0 0 0 0.6px #dedede"></div>
<div class="ab" style="left:288.4px;top:712.2px;width:1000px;height:12px;background:#ededed;border-radius:5px 0 0 0;box-shadow:0 0 0 0.6px #dedede"></div>
</body></html>
